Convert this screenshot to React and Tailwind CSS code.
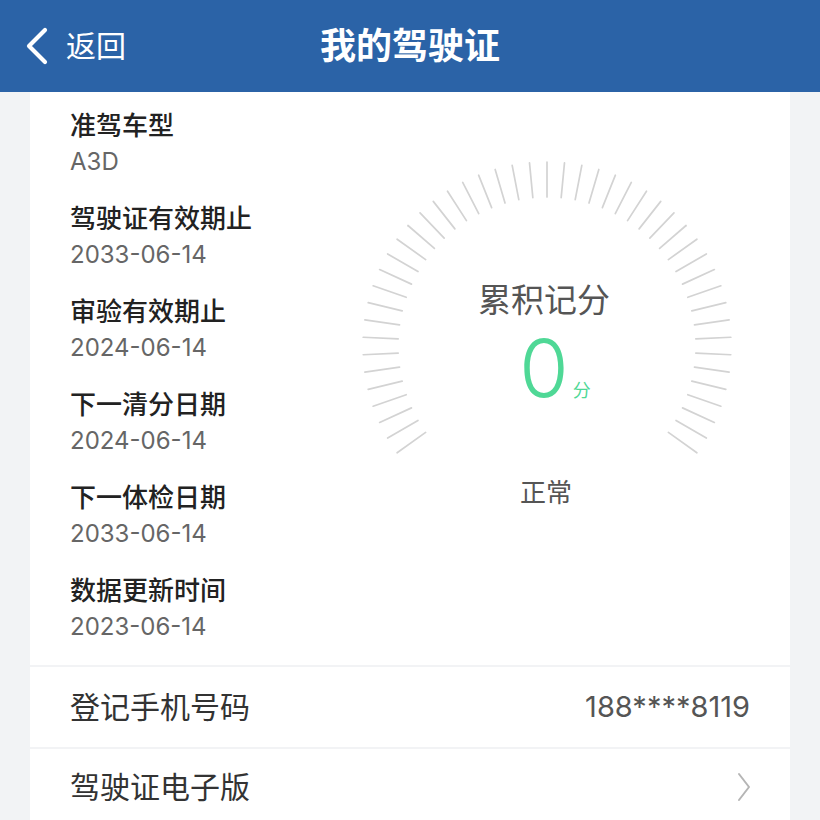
import React from "react";

const fields = [
  { label: "准驾车型", value: "A3D" },
  { label: "驾驶证有效期止", value: "2033-06-14" },
  { label: "审验有效期止", value: "2024-06-14" },
  { label: "下一清分日期", value: "2024-06-14" },
  { label: "下一体检日期", value: "2033-06-14" },
  { label: "数据更新时间", value: "2023-06-14" },
];

// Tick marks round the score dial
function Dial() {
  const cx = 230;
  const cy = 200;
  const outer = 184;
  const inner = 149;
  const step = 90 / 16.5;
  const ticks = [];
  for (let i = -23; i <= 23; i++) {
    const a = (i * step * Math.PI) / 180;
    ticks.push(
      <line
        key={i}
        x1={cx + inner * Math.sin(a)}
        y1={cy - inner * Math.cos(a)}
        x2={cx + outer * Math.sin(a)}
        y2={cy - outer * Math.cos(a)}
        stroke="#d3d3d3"
        strokeWidth="1.7"
        strokeLinecap="round"
      />
    );
  }
  return (
    <svg className="absolute inset-0" width="460" height="400" viewBox="0 0 460 400">
      {ticks}
    </svg>
  );
}

export default function App() {
  return (
    <div
      className="w-[820px] h-[820px] overflow-hidden bg-[#f2f3f5]"
      style={{ fontFamily: 'Inter, "Noto Sans CJK SC", sans-serif' }}
    >
      {/* Header */}
      <div className="h-[92px] bg-[#2b63a7] grid grid-cols-[1fr_auto_1fr] items-center text-white">
        <div className="flex items-center pl-[25px]">
          <svg width="24" height="38" viewBox="0 0 24 38" fill="none">
            <polyline
              points="20,3 4,19 20,35"
              stroke="white"
              strokeWidth="4.2"
              strokeLinecap="round"
              strokeLinejoin="round"
            />
          </svg>
          <span className="ml-[17px] text-[30px] leading-none">返回</span>
        </div>
        <div className="text-[36px] font-bold leading-none">我的驾驶证</div>
        <div />
      </div>

      <div className="mx-[30px] flex flex-col gap-[2px]">
        {/* Licence details + score dial */}
        <div className="h-[573px] bg-white flex">
          <div className="w-[287px] pl-[40px] pt-[17px] flex flex-col gap-[23px]">
            {fields.map((f) => (
              <div key={f.label}>
                <div className="text-[26px] leading-[34px] font-medium text-[#222]">{f.label}</div>
                <div className="pt-[2px] text-[24px] leading-[34px] text-[#666]">{f.value}</div>
              </div>
            ))}
          </div>
          <div className="relative w-[460px] h-[400px] mt-[54px]">
            <Dial />
            <div className="relative flex flex-col items-center pt-[134px] pr-[6px]">
              <div className="text-[33px] leading-[40px] text-[#555]">累积记分</div>
              <div className="flex items-baseline mt-[8px] pl-[22px]">
                <span className="text-[80px] leading-none font-light text-[#4fd896]">0</span>
                <span className="ml-[4px] text-[18px] leading-none text-[#4fd896]">分</span>
              </div>
              <div className="mt-[68px] pl-[4px] text-[26px] leading-[34px] text-[#555]">正常</div>
            </div>
          </div>
        </div>

        {/* Phone row */}
        <div className="h-[80px] bg-white flex items-center justify-between px-[40px]">
          <span className="text-[30px] text-[#333]">登记手机号码</span>
          <span className="text-[29px] text-[#555]">188****8119</span>
        </div>

        {/* Electronic licence row */}
        <div className="h-[80px] bg-white flex items-center justify-between pl-[40px] pr-[38px] pb-[4px]">
          <span className="text-[30px] text-[#333]">驾驶证电子版</span>
          <svg width="16" height="32" viewBox="0 0 16 32" fill="none">
            <polyline
              points="3,3 13,16 3,29"
              stroke="#b5b5b5"
              strokeWidth="2"
              strokeLinecap="round"
              strokeLinejoin="round"
            />
          </svg>
        </div>
      </div>
    </div>
  );
}
